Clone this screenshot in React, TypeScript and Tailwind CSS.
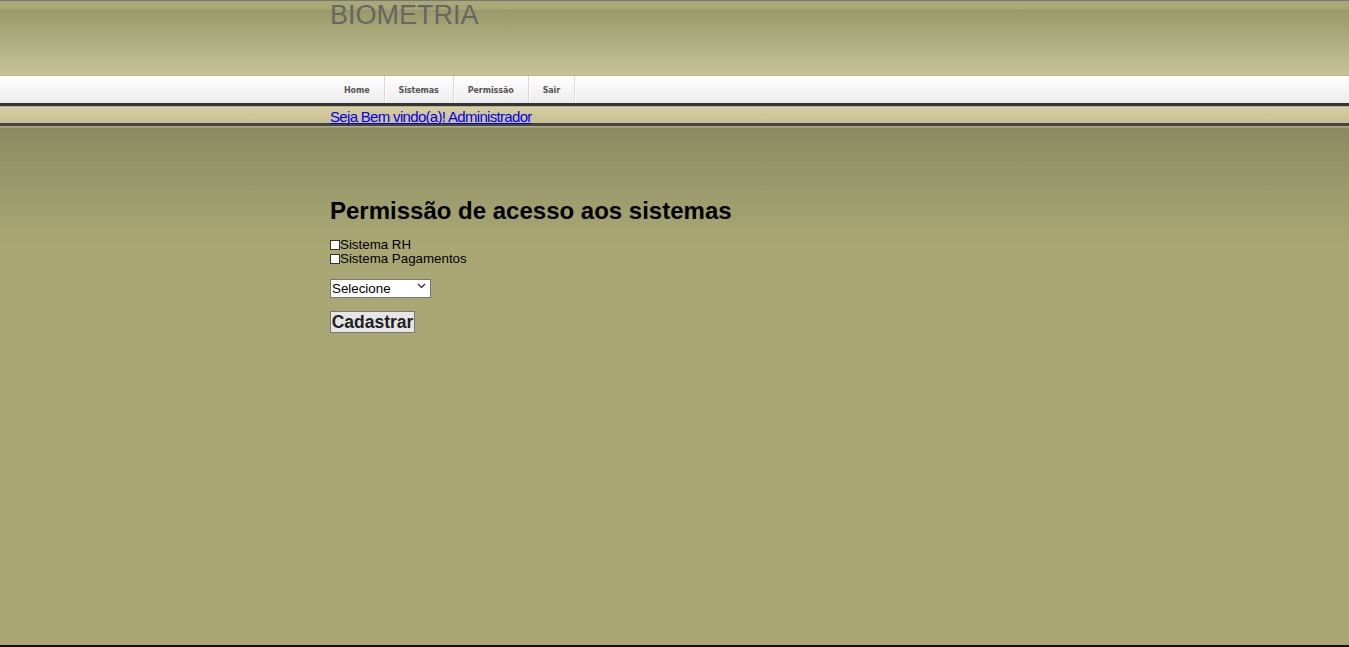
import { useState } from 'react';

const menu = ['Home', 'Sistemas', 'Permissão', 'Sair'];

export default function App() {
  const [rh, setRh] = useState(false);
  const [pag, setPag] = useState(false);

  return (
    <div className="h-screen flex flex-col bg-[#a9a874] font-['Liberation_Sans',Arial,sans-serif]">
      {/* topo */}
      <div className="h-[76px] shrink-0 border-t border-[#777] border-b border-b-[#c2b48c] bg-[linear-gradient(to_bottom,#a8a776_0px,#a8a776_8px,#9a9969_9px,#c5c498_100%)]">
        <div className="w-[689px] mx-auto">
          <h1 className="text-[27px] leading-[30px] text-[#666] -mt-[1px]">BIOMETRIA</h1>
        </div>
      </div>

      {/* menu */}
      <div className="h-[30px] shrink-0 bg-[linear-gradient(to_bottom,#ffffff,#ececec)] border-b-[3px] border-[#333]">
        <div className="w-[689px] mx-auto flex h-full">
          {menu.map((m) => (
            <a
              key={m}
              href="#"
              className="h-full flex items-center pt-[2px] px-[14px] border-r border-[#d9d9d9] shadow-[1px_0_0_#fff] text-[8px] tracking-[-0.1px] font-bold text-[#555] font-['DejaVu_Sans',Verdana,sans-serif]"
            >
              {m}
            </a>
          ))}
        </div>
      </div>

      {/* boas vindas */}
      <div className="h-[20px] shrink-0 border-t border-[#b9b08a] bg-[linear-gradient(to_bottom,#d6cea3,#c8c092)] border-b-[3px] border-b-[#444]">
        <div className="w-[689px] mx-auto">
          <a href="#" className="block pt-[2px] text-[15px] leading-[16px] tracking-[-0.68px] text-[#0000ee] underline">
            Seja Bem vindo(a)! Administrador
          </a>
        </div>
      </div>

      {/* conteudo */}
      <div className="flex-1 bg-[linear-gradient(to_bottom,#b0ae80_0px,#b0ae80_1px,#8b8b62_2px,#a9a874_120px,#a9a874_100%)]">
        <div className="w-[689px] mx-auto pt-[71px]">
          <h2 className="text-[24px] font-bold leading-[28px] text-black">Permissão de acesso aos sistemas</h2>
          <div className="mt-[13px] text-[13.33px] leading-[14px] text-black">
            <label className="flex items-center">
              <input
                type="checkbox"
                checked={rh}
                onChange={() => setRh(!rh)}
                className="appearance-none w-[10px] h-[10px] border border-[#333] bg-white"
              />
              Sistema RH
            </label>
            <label className="flex items-center">
              <input
                type="checkbox"
                checked={pag}
                onChange={() => setPag(!pag)}
                className="appearance-none w-[10px] h-[10px] border border-[#333] bg-white"
              />
              Sistema Pagamentos
            </label>
          </div>
          <div className="mt-[10px] relative w-[101px]">
            <select className="appearance-none w-[101px] h-[19px] bg-white border border-[#767676] text-[13.33px] leading-[17px] text-black pl-[1px] pr-0">
              <option>Selecione</option>
            </select>
            <svg
              className="absolute right-[5px] top-[7px] pointer-events-none"
              width="9"
              height="6"
              viewBox="0 0 9 6"
              fill="none"
              stroke="#222"
              strokeWidth="1.2"
            >
              <path d="M1 1l3.5 3.5L8 1" />
            </svg>
          </div>
          <div className="mt-[11px]">
            <button className="h-[22px] px-0 w-[85px] bg-[#e6e6e6] border border-[#767676] text-[17.5px] font-bold leading-[20px] text-[#222]">
              Cadastrar
            </button>
          </div>
        </div>
      </div>

      <div className="h-[2px] shrink-0 bg-[#111]"></div>
    </div>
  );
}
